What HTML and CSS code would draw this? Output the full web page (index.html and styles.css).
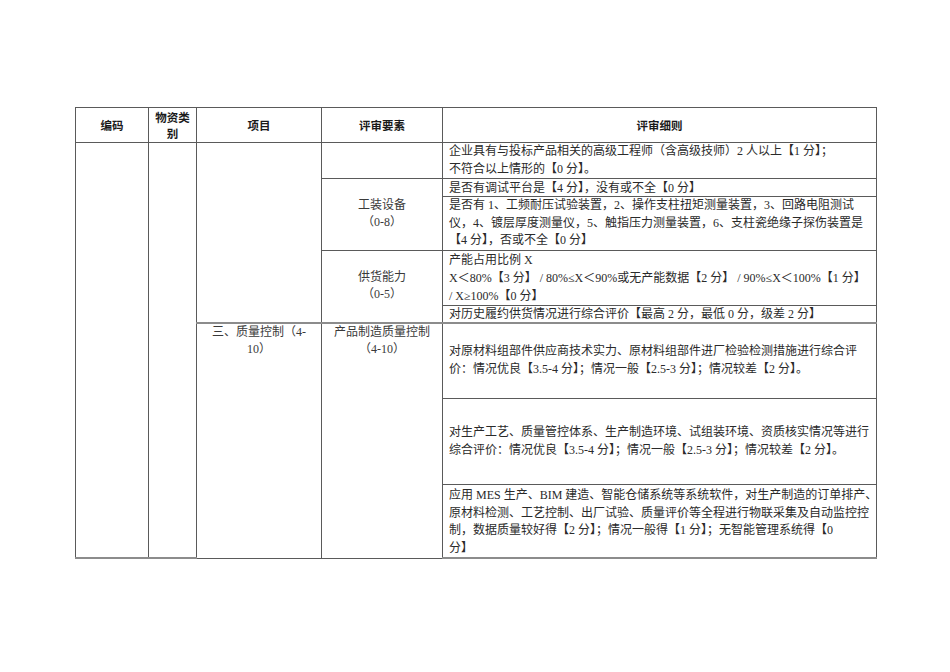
FILE: index.html
```html
<!DOCTYPE html>
<html lang="zh">
<head>
<meta charset="utf-8">
<title>评审细则</title>
<link rel="stylesheet" href="styles.css">
</head>
<body>
<div class="page">
<table class="grid">
  <colgroup>
    <col class="c1"><col class="c2"><col class="c3"><col class="c4"><col class="c5">
  </colgroup>
  <thead>
    <tr class="h-head">
      <th>编码</th>
      <th>物资类<br>别</th>
      <th>项目</th>
      <th>评审要素</th>
      <th>评审细则</th>
    </tr>
  </thead>
  <tbody>
    <tr class="h-r1">
      <td rowspan="8"></td>
      <td rowspan="8"></td>
      <td rowspan="5"></td>
      <td></td>
      <td class="detail">企业具有与投标产品相关的高级工程师（含高级技师）2 人以上【1 分】；<br>不符合以上情形的【0 分】。</td>
    </tr>
    <tr class="h-r2">
      <td rowspan="2" class="factor">工装设备<br>（0-8）</td>
      <td class="detail single">是否有调试平台是【4 分】，没有或不全【0 分】</td>
    </tr>
    <tr class="h-r3">
      <td class="detail">是否有 1、工频耐压试验装置，2、操作支柱扭矩测量装置，3、回路电阻测试<br>仪，4、镀层厚度测量仪，5、触指压力测量装置，6、支柱瓷绝缘子探伤装置是<br>【4 分】，否或不全【0 分】</td>
    </tr>
    <tr class="h-r4">
      <td rowspan="2" class="factor">供货能力<br>（0-5）</td>
      <td class="detail wide">产能占用比例 X<br>X＜80%【3 分】 / 80%≤X＜90%或无产能数据【2 分】 / 90%≤X＜100%【1 分】<br>/ X≥100%【0 分】</td>
    </tr>
    <tr class="h-r5">
      <td class="detail single">对历史履约供货情况进行综合评价【最高 2 分，最低 0 分，级差 2 分】</td>
    </tr>
    <tr class="h-r6 sep">
      <td rowspan="3" class="factor top">三、质量控制（4-<br>10）</td>
      <td rowspan="3" class="factor top">产品制造质量控制<br>（4-10）</td>
      <td class="detail">对原材料组部件供应商技术实力、原材料组部件进厂检验检测措施进行综合评<br>价：情况优良【3.5-4 分】；情况一般【2.5-3 分】；情况较差【2 分】。</td>
    </tr>
    <tr class="h-r7">
      <td class="detail">对生产工艺、质量管控体系、生产制造环境、试组装环境、资质核实情况等进行<br>综合评价：情况优良【3.5-4 分】；情况一般【2.5-3 分】；情况较差【2 分】。</td>
    </tr>
    <tr class="h-r8">
      <td class="detail top last">应用 MES 生产、BIM 建造、智能仓储系统等系统软件，对生产制造的订单排产、<br>原材料检测、工艺控制、出厂试验、质量评价等全程进行物联采集及自动监控控<br>制，数据质量较好得【2 分】；情况一般得【1 分】；无智能管理系统得【0<br>分】</td>
    </tr>
  </tbody>
</table>
</div>
</body>
</html>
```

FILE: styles.css
```css
html, body {
  margin: 0;
  padding: 0;
  background: #ffffff;
}

.page {
  padding: 107px 0 0 75px;
}

.grid {
  border-collapse: collapse;
  table-layout: fixed;
  width: 801px;
  font-family: "Liberation Serif", "Noto Sans CJK SC", serif;
  font-size: 12px;
  line-height: 17.5px;
  color: #2a2a2a;
}

.c1 { width: 73px; }
.c2 { width: 48px; }
.c3 { width: 125px; }
.c4 { width: 121px; }
.c5 { width: 434px; }

.grid th,
.grid td {
  border: 1px solid #5a5a5a;
  padding: 0 6px;
  vertical-align: middle;
  white-space: nowrap;
}

.grid th {
  font-family: "Noto Sans CJK SC", sans-serif;
  font-weight: 700;
  font-size: 11.5px;
  line-height: 16px;
  color: #1a1a1a;
  text-align: center;
}

.grid td.factor {
  text-align: center;
  color: #3a3a3a;
}

.grid td.top {
  vertical-align: top;
}

.grid td.detail {
  text-align: left;
  padding-left: 6px;
}

.grid td.last {
  padding-top: 2px;
}

.grid td.single {
  line-height: 16px;
}

.grid td.wide {
  line-height: 18px;
}

.grid tr.sep td {
  border-top: 2px solid #8c8c8c;
}

.grid tbody tr:last-child td,
.grid td[rowspan="8"] {
  border-bottom: 2px solid #8c8c8c;
}

.h-head { height: 35px; }
.h-r1 { height: 34px; }
.h-r2 { height: 18px; }
.h-r3 { height: 52px; }
.h-r4 { height: 54px; }
.h-r5 { height: 16px; }
.h-r6 { height: 76px; }
.h-r7 { height: 86px; }
.h-r8 { height: 73px; }
```
